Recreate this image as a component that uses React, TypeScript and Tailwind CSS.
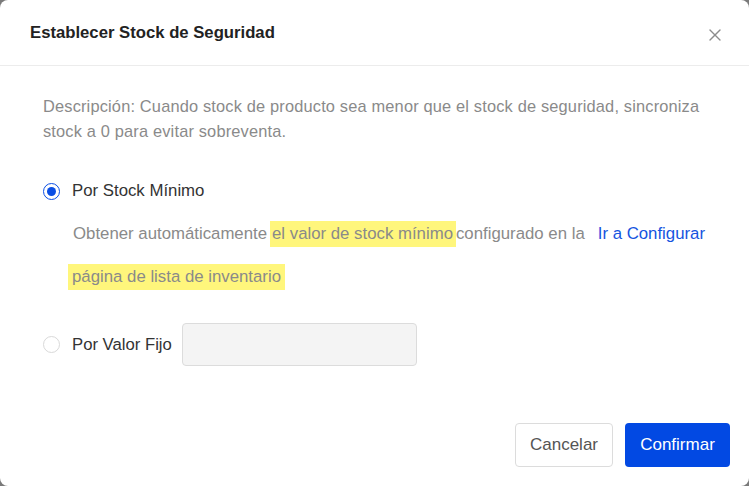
import { X } from 'lucide-react'

function Radio({ checked }: { checked: boolean }) {
  return checked ? (
    <span className="w-[17px] h-[17px] rounded-full border border-[#0a4ee4] flex items-center justify-center shrink-0">
      <span className="w-[9px] h-[9px] rounded-full bg-[#0a4ee4]" />
    </span>
  ) : (
    <span className="w-[17px] h-[17px] rounded-full border border-[#d9d9d9] bg-white shrink-0" />
  )
}

export default function App() {
  return (
    <div className="w-[749px] h-[486px] bg-[#7a7a7a]" style={{ fontFamily: '"Liberation Sans", Arial, sans-serif' }}>
      <div className="w-full h-full bg-white rounded-[8px] flex flex-col">
        <div className="h-[66px] border-b border-[#ececec] flex items-center justify-between pl-[30px] pr-[24px] shrink-0">
          <h2 className="text-[16.7px] font-bold text-[#222]">Establecer Stock de Seguridad</h2>
          <X size={20} strokeWidth={1.6} className="text-[#8c8c8c] mt-[4px]" />
        </div>

        <div className="flex-1 pl-[43px] pr-[30px] pt-[28px]">
          <p className="text-[16.4px] leading-[25px] tracking-[0.01em] text-[#8a8a8a]">
            Descripción: Cuando stock de producto sea menor que el stock de seguridad, sincroniza stock a 0 para evitar sobreventa.
          </p>

          <div className="mt-[36px] flex items-center gap-[12px] h-[22px]">
            <Radio checked />
            <span className="text-[16.8px] text-[#333]">Por Stock Mínimo</span>
          </div>

          <div className="mt-[19px] -ml-[43px] pl-[68px] flex flex-wrap items-center gap-y-[17px] text-[16.8px] text-[#8a8a8a]">
            <span className="pl-[5px] leading-[26px]">Obtener automáticamente</span>
            <span className="bg-[#fff67c] pl-[2px] pr-[3px] ml-[3px] leading-[26px]">el valor de stock mínimo</span>
            <span className="leading-[26px]">configurado en la</span>
            <a className="text-[#1554e0] ml-[13px] leading-[26px]">Ir a Configurar</a>
            <span className="bg-[#fff67c] px-[4px] leading-[26px]">página de lista de inventario</span>
          </div>

          <div className="mt-[33px] flex items-center">
            <Radio checked={false} />
            <span className="ml-[12px] text-[16.7px] text-[#333]">Por Valor Fijo</span>
            <div className="ml-[10px] w-[235px] h-[43px] rounded-[4px] border border-[#dcdcdc] bg-[#f4f4f4]" />
          </div>
        </div>

        <div className="flex justify-end gap-[12px] pr-[19px] pb-[19px]">
          <button className="w-[98px] h-[44px] rounded-[4px] border border-[#dcdcdc] bg-white text-[17px] text-[#555]">
            Cancelar
          </button>
          <button className="w-[105px] h-[44px] rounded-[4px] bg-[#0249e3] text-[17px] text-white">
            Confirmar
          </button>
        </div>
      </div>
    </div>
  )
}
